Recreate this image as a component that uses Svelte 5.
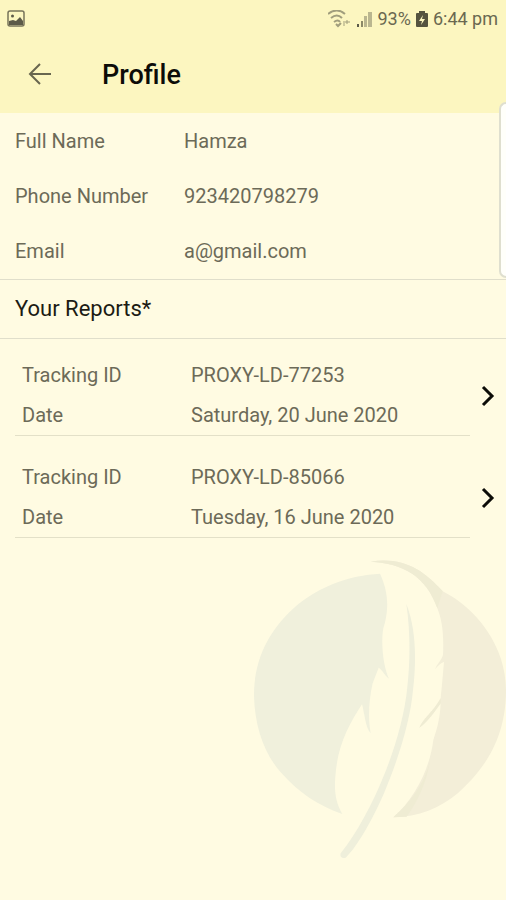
<script lang="ts">
  type Report = { id: string; date: string };

  const details = [
    { label: 'Full Name', value: 'Hamza' },
    { label: 'Phone Number', value: '923420798279' },
    { label: 'Email', value: 'a@gmail.com' },
  ];

  const reports: Report[] = [
    { id: 'PROXY-LD-77253', date: 'Saturday, 20 June 2020' },
    { id: 'PROXY-LD-85066', date: 'Tuesday, 16 June 2020' },
  ];
</script>

<div class="screen">
  <div class="top">
    <div class="status">
      <svg width="18" height="18" viewBox="0 0 18 18" aria-hidden="true">
        <rect x="1" y="1" width="16" height="15" rx="2" fill="none" stroke="#77745a" stroke-width="1.5" />
        <circle cx="5.5" cy="6" r="1.5" fill="#5c5a48" />
        <path d="M2 15v-4l4-1 3 1 4-4 3 4v4z" fill="#5c5a48" />
      </svg>
      <div class="status-right">
        <svg width="23" height="18" viewBox="0 0 23 18" fill="none" stroke="#a19e7d" stroke-width="2" aria-hidden="true">
          <path d="M0 4q9-7 17 0M3 8q6-5 11 0M6 12q4-3 6 0" />
          <path d="M8 14l2 2 3-3" />
          <path d="M16 11v5M19 10v4M17 12h5" stroke-width="1" />
        </svg>
        <svg width="17" height="18" viewBox="0 0 17 18" aria-hidden="true">
          <path d="M1 14h2v3H1z" fill="#5c5a48" />
          <path d="M5 11h2v6H5z" fill="#8c8968" />
          <path d="M8 6h3v11H8zM12 2h4v15h-4z" fill="#bab68f" />
        </svg>
        <span>93%</span>
        <svg width="12" height="18" viewBox="0 0 12 18" aria-hidden="true">
          <path d="M3 1h6v2h2q1 0 1 1v12q0 1-1 1H1q-1 0-1-1V4q0-1 1-1h2z" fill="#55533f" />
          <path d="M7 5l-4 6h3l-1 4 4-6H6z" fill="#fcf6c0" />
        </svg>
        <span>6:44 pm</span>
      </div>
    </div>
    <header class="bar">
      <button class="back" aria-label="Back">
        <svg width="24" height="24" viewBox="0 0 24 24" fill="none" stroke="#68664f" stroke-width="2" aria-hidden="true">
          <path d="M23 11H2M12 1L2 11l10 10" />
        </svg>
      </button>
      <h1>Profile</h1>
    </header>
  </div>

  <main>
    <dl class="details">
      {#each details as item}
        <div class="detail">
          <dt>{item.label}</dt>
          <dd>{item.value}</dd>
        </div>
      {/each}
    </dl>

    <h2>Your Reports*</h2>

    <ul class="reports">
      {#each reports as report (report.id)}
        <li>
          <dl class="report">
            <div class="line">
              <dt>Tracking ID</dt>
              <dd>{report.id}</dd>
            </div>
            <div class="line">
              <dt>Date</dt>
              <dd>{report.date}</dd>
            </div>
          </dl>
          <button class="open" aria-label="Open report {report.id}">
            <svg width="14" height="22" viewBox="0 0 14 22" fill="none" stroke="#0c0c08" stroke-width="3" aria-hidden="true">
              <path d="M2 2l9 9-9 9" />
            </svg>
          </button>
        </li>
      {/each}
    </ul>
  </main>

  <div class="edge-panel"></div>

  <svg class="feather" viewBox="0 0 798 1020" aria-hidden="true">
    <path
      d="M420 101C330 105 220 142 145 220C75 290 42 375 42 465C44 565 75 645 125 700C175 757 235 798 307 822C288 790 282 755 286 710C292 620 325 555 366 493C374 520 375 560 392 580C384 540 386 480 398 430L416 383C428 390 432 405 447 416C430 380 422 310 430 265C446 215 448 160 420 101Z"
      fill="#f0f0dc"
    />
    <path
      d="M392 65C490 50 550 90 608 154C710 205 798 320 798 450C798 600 730 690 655 758C600 805 535 830 460 832C530 770 570 680 580 600C594 560 600 530 602 490C580 520 560 550 538 563C550 535 580 515 602 475C606 440 608 410 612 366C602 368 594 378 585 388C592 370 604 362 609 345C612 280 606 240 592 205C560 110 490 70 392 65Z"
      fill="#f3eed8"
    />
    <path
      d="M392 65C490 50 550 90 608 154L592 205C560 110 490 70 392 65ZM538 563C550 535 580 515 602 475L602 490C580 520 560 550 538 563ZM460 832C530 770 560 710 570 660C560 730 530 790 500 830Z"
      fill="#efecd3"
    />
    <path
      d="M499 192C512 280 510 370 502 440C494 530 460 640 430 710C398 790 350 880 302 940Q298 957 317 953C354 920 414 810 444 730C484 630 512 530 519 450C531 350 526 260 499 192Z"
      fill="#efefdb"
    />
  </svg>
</div>

<style>
  :global(body) {
    margin: 0;
  }
  .screen {
    position: relative;
    isolation: isolate;
    min-height: 100vh;
    background: #fffbe2;
    color: #6c6a58;
    font-family: Roboto, 'Liberation Sans', sans-serif;
    font-size: 20px;
  }
  .top {
    background: #fcf6c0;
  }
  .status {
    display: flex;
    align-items: center;
    justify-content: space-between;
    height: 37px;
    padding: 0 8px 0 7px;
    color: #6a6850;
    font-size: 18px;
  }
  .status-right {
    display: flex;
    align-items: center;
    gap: 5px;
  }
  .bar {
    display: flex;
    align-items: center;
    gap: 38px;
    height: 76px;
    padding-left: 16px;
  }
  button {
    display: flex;
    align-items: center;
    justify-content: center;
    padding: 0;
    border: 0;
    background: none;
    cursor: pointer;
  }
  .back {
    width: 48px;
    height: 48px;
  }
  h1,
  h2,
  dl,
  dd,
  ul {
    margin: 0;
    padding: 0;
  }
  h1 {
    color: #0c0c08;
    font-size: 27px;
    font-weight: 500;
  }
  .details {
    padding-top: 1px;
    border-bottom: 1px solid #e0decb;
  }
  .detail,
  .line {
    display: grid;
    grid-template-columns: 169px 1fr;
  }
  .detail {
    padding-left: 15px;
    line-height: 55px;
  }
  h2 {
    padding-left: 15px;
    border-bottom: 1px solid #e0decb;
    color: #1c1b14;
    font-size: 22px;
    font-weight: 400;
    line-height: 58px;
  }
  .reports {
    display: grid;
    gap: 21px;
    padding: 16px 0 0 15px;
    list-style: none;
  }
  .reports li {
    display: flex;
    align-items: center;
  }
  .report {
    flex: 1;
    padding-left: 7px;
    border-bottom: 1px solid #e3e0c8;
    line-height: 40px;
  }
  .open {
    width: 36px;
    height: 48px;
  }
  .edge-panel {
    position: absolute;
    top: 102px;
    right: 0;
    box-sizing: border-box;
    width: 7px;
    height: 176px;
    border: 2px solid #dfdfcf;
    border-right: 0;
    border-radius: 7px 0 0 7px;
    background: #fffffa;
  }
  .feather {
    position: absolute;
    right: 0;
    bottom: 20px;
    z-index: -1;
    width: 266px;
    height: 340px;
  }
</style>
